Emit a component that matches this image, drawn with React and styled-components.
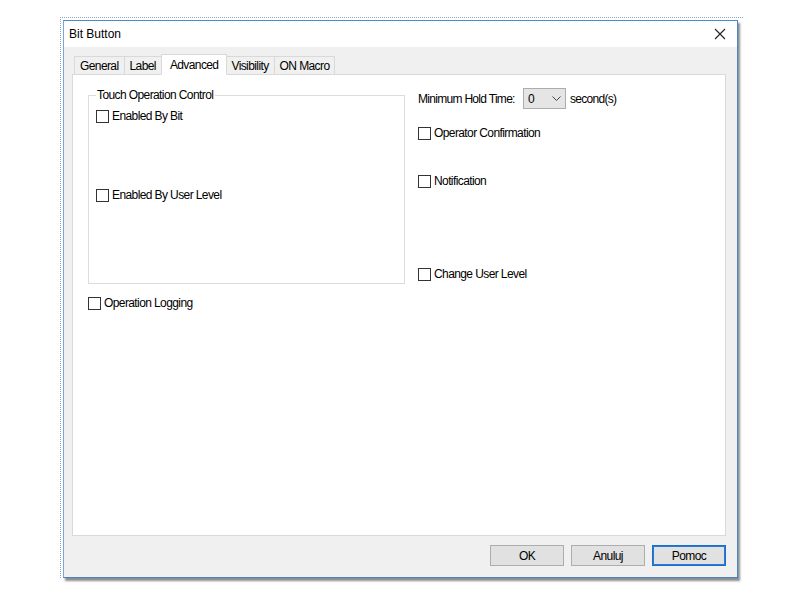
import React from 'react';
import styled, { createGlobalStyle } from 'styled-components';

const Global = createGlobalStyle`
  html, body {
    margin: 0;
    padding: 0;
    background: #ffffff;
  }
  body {
    font-family: "Liberation Sans", Arial, sans-serif;
    font-size: 12px;
    color: #000;
  }
`

const Page = styled.div`
  width: 800px;
  height: 600px;
  padding: 17px 0 0 60px;
  box-sizing: border-box;
`

const Frame = styled.div`
  width: 680px;
  border-left: 1px dotted #8fa6bf;
  border-top: 1px dotted #8fa6bf;
  padding: 2px 0 0 2px;
`

const Window = styled.div`
  width: 675px;
  height: 558px;
  box-sizing: border-box;
  border: 1px solid #4a86c5;
  border-left-color: #7aa7d6;
  background: #f0f0f0;
  display: flex;
  flex-direction: column;
  box-shadow: 2px 3px 2px rgba(0, 0, 0, 0.45);
`

const TitleBar = styled.div`
  height: 26px;
  background: #ffffff;
  display: flex;
  align-items: center;
  justify-content: space-between;
  padding: 0 10px 0 5px;
  font-size: 12px;
`

const Close = styled.div`
  width: 14px;
  height: 14px;
  display: flex;
  align-items: center;
  justify-content: center;
`

const Body = styled.div`
  flex: 1;
  display: flex;
  flex-direction: column;
  padding: 7px 11px 11px 8px;
`

const Tabs = styled.div`
  display: flex;
  align-items: flex-end;
  height: 20px;
  padding-left: 2px;
  position: relative;
  z-index: 1;
`

const Tab = styled.div`
  height: ${p => (p.$active ? '21px' : '18px')};
  box-sizing: border-box;
  padding: 0 ${p => (p.$active ? '8px' : '5px')};
  margin: 0 ${p => (p.$active ? '-1px' : '0')};
  display: flex;
  align-items: ${p => (p.$active ? 'flex-start' : 'center')};
  padding-top: ${p => (p.$active ? '3px' : '0')};
  background: ${p => (p.$active ? '#ffffff' : '#f0f0f0')};
  border: 1px solid #d9d9d9;
  border-bottom: ${p => (p.$active ? '1px solid #ffffff' : 'none')};
  border-left: ${p => (p.$first || p.$active ? '1px solid #d9d9d9' : 'none')};
  letter-spacing: -0.6px;
  position: relative;
  z-index: ${p => (p.$active ? 2 : 1)};
  margin-bottom: ${p => (p.$active ? '-1px' : '0')};
`

const Panel = styled.div`
  height: 462px;
  background: #ffffff;
  border: 1px solid #d9d9d9;
  box-sizing: border-box;
  display: flex;
  gap: 12px;
  padding: 13px 0 0 15px;
`

const LeftCol = styled.div`
  width: 317px;
  display: flex;
  flex-direction: column;
`

const RightCol = styled.div`
  display: flex;
  flex-direction: column;
  padding-left: 1px;
`

const Group = styled.fieldset`
  margin: 0;
  padding: 0 7px;
  min-width: 0;
  height: 196px;
  box-sizing: border-box;
  border: 1px solid #dcdcdc;
  display: flex;
  flex-direction: column;
`

const Legend = styled.legend`
  padding: 0 2px 0 1px;
  margin-left: 0;
  letter-spacing: -0.6px;
  line-height: 14px;
`

const Check = styled.label`
  display: flex;
  align-items: center;
  gap: 3px;
  height: 14px;
  margin-top: ${p => p.$top || 0}px;
  letter-spacing: -0.6px;
  white-space: nowrap;
`

const Box = styled.span`
  width: 13px;
  height: 13px;
  box-sizing: border-box;
  border: 1px solid #333333;
  background: #ffffff;
  flex: none;
`

const HoldRow = styled.div`
  display: flex;
  align-items: center;
  height: 21px;
  letter-spacing: -0.7px;
`

const HoldLabel = styled.span`
  width: 105px;
`

const Combo = styled.div`
  width: 43px;
  height: 21px;
  box-sizing: border-box;
  border: 1px solid #adadad;
  background: #e5e5e5;
  display: flex;
  align-items: center;
  justify-content: space-between;
  padding: 0 4px 0 4px;
  margin-right: 4px;
`

const Buttons = styled.div`
  display: flex;
  justify-content: flex-end;
  gap: 7px;
  margin-top: 9px;
`

const Button = styled.div`
  width: 74px;
  height: 21px;
  box-sizing: border-box;
  border: 1px solid ${p => (p.$default ? '#1c6fc9' : '#adadad')};
  box-shadow: ${p => (p.$default ? 'inset 0 0 0 1px #2a7ad3' : 'none')};
  background: #e1e1e1;
  display: flex;
  align-items: center;
  justify-content: center;
  letter-spacing: -0.6px;
`

const CheckItem = ({ label, top }) => (
  <Check $top={top}>
    <Box />
    {label}
  </Check>
)

const App = () => {
  const tabs = ['General', 'Label', 'Advanced', 'Visibility', 'ON Macro'];
  return (
    <Page>
      <Global />
      <Frame>
        <Window>
          <TitleBar>
            <span>Bit Button</span>
            <Close>
              <svg width="12" height="12" viewBox="0 0 12 12">
                <path d="M1 1 L11 11 M11 1 L1 11" stroke="#222" strokeWidth="1.1" />
              </svg>
            </Close>
          </TitleBar>
          <Body>
            <Tabs>
              {tabs.map((t, i) => (
                <Tab key={t} $active={t === 'Advanced'} $first={i === 0}>{t}</Tab>
              ))}
            </Tabs>
            <Panel>
              <LeftCol>
                <Group>
                  <Legend>Touch Operation Control</Legend>
                  <CheckItem label="Enabled By Bit" top={7} />
                  <CheckItem label="Enabled By User Level" top={65} />
                </Group>
                <CheckItem label="Operation Logging" top={12} />
              </LeftCol>
              <RightCol>
                <HoldRow>
                  <HoldLabel>Minimum Hold Time:</HoldLabel>
                  <Combo>
                    <span>0</span>
                    <svg width="9" height="6" viewBox="0 0 9 6">
                      <path d="M0.5 0.5 L4.5 4.5 L8.5 0.5" stroke="#444" strokeWidth="1" fill="none" />
                    </svg>
                  </Combo>
                  <span>second(s)</span>
                </HoldRow>
                <CheckItem label="Operator Confirmation" top={17} />
                <CheckItem label="Notification" top={34} />
                <CheckItem label="Change User Level" top={79} />
              </RightCol>
            </Panel>
            <Buttons>
              <Button>OK</Button>
              <Button>Anuluj</Button>
              <Button $default>Pomoc</Button>
            </Buttons>
          </Body>
        </Window>
      </Frame>
    </Page>
  )
}

export default App;
